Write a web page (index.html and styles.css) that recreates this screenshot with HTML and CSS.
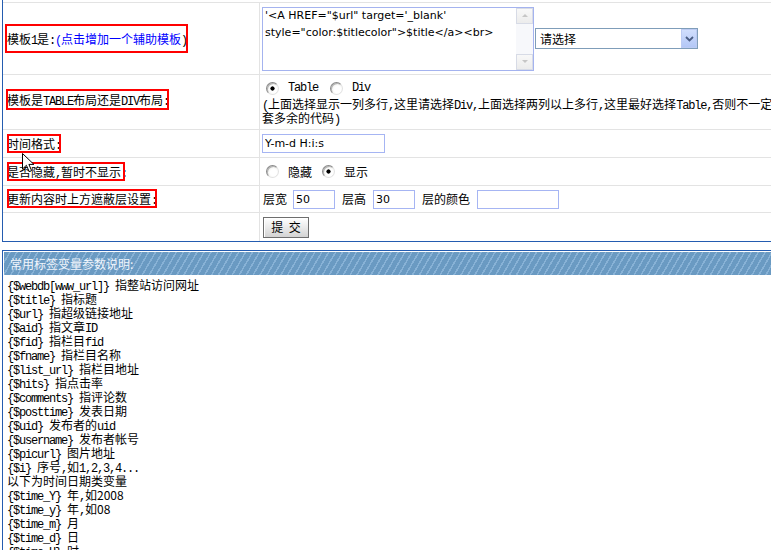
FILE: index.html
```html
<!DOCTYPE html>
<html lang="zh-CN">
<head>
<meta charset="utf-8">
<title>模板设置</title>
<link rel="stylesheet" href="styles.css">
</head>
<body>
<div class="page">
  <form class="form" action="#">
    <div class="row r1">
      <div class="label"><span class="mark m1">模板<span class="en">1</span>是<span class="en">:</span><a href="#"><span class="en">(</span>点击增加一个辅助模板</a><span class="en">)</span></span></div>
      <div class="field">
        <div class="textarea">
          <div class="ta-text">'&lt;A HREF="$url" target='_blank'
style="color:$titlecolor"&gt;$title&lt;/a&gt;&lt;br&gt;</div>
          <div class="ta-bar">
            <span class="ta-btn up"></span>
            <span class="ta-btn down"></span>
          </div>
        </div>
        <div class="select">
          <span class="select-text">请选择</span>
          <span class="select-btn">
            <svg width="9" height="6" viewBox="0 0 9 6"><path d="M1 1 L4.5 4.5 L8 1" fill="none" stroke="#4a5d84" stroke-width="1.8"/></svg>
          </span>
        </div>
      </div>
    </div>

    <div class="row r2">
      <div class="label"><span class="mark m2">模板是<span class="en">TABLE</span>布局还是<span class="en">DIV</span>布局<span class="en">:</span></span></div>
      <div class="field f2">
        <div class="opts">
          <label class="opt"><input class="rb" type="radio" name="layout" checked><span class="en">Table</span></label>
          <label class="opt"><input class="rb" type="radio" name="layout"><span class="en">Div</span></label>
        </div>
        <div class="note"><span class="en">(</span>上面选择显示一列多行<span class="en">,</span>这里请选择<span class="en">Div,</span>上面选择两列以上多行<span class="en">,</span>这里最好选择<span class="en">Table,</span>否则不一定要套多余的代码<span class="en">)</span></div>
      </div>
    </div>

    <div class="row r3">
      <div class="label"><span class="mark m3">时间格式<span class="en">:</span></span></div>
      <div class="field">
        <input class="txt w-fmt" type="text" value="Y-m-d H:i:s">
      </div>
    </div>

    <div class="row r4">
      <div class="label"><span class="mark m4">是否隐藏<span class="en">,</span>暂时不显示<span class="en">:</span></span></div>
      <div class="field">
        <div class="opts opts-cn">
          <label class="opt"><input class="rb" type="radio" name="hide"><span>隐藏</span></label>
          <label class="opt"><input class="rb" type="radio" name="hide" checked><span>显示</span></label>
        </div>
      </div>
    </div>

    <div class="row r5">
      <div class="label"><span class="mark m5">更新内容时上方遮蔽层设置<span class="en">:</span></span></div>
      <div class="field layer">
        <span>层宽</span><input class="txt w-s" type="text" value="50">
        <span>层高</span><input class="txt w-s" type="text" value="30">
        <span>层的颜色</span><input class="txt w-c" type="text" value="">
      </div>
    </div>

    <div class="row r6">
      <div class="label"></div>
      <div class="field">
        <button class="btn" type="submit">提 交</button>
      </div>
    </div>
  </form>

  <div class="panel">
    <div class="panel-head">常用标签变量参数说明:</div>
    <div class="vars">
      <div><span class="en">{$webdb[www_url]} </span>指整站访问网址</div>
      <div><span class="en">{$title} </span>指标题</div>
      <div><span class="en">{$url} </span>指超级链接地址</div>
      <div><span class="en">{$aid} </span>指文章<span class="en">ID</span></div>
      <div><span class="en">{$fid} </span>指栏目<span class="en">fid</span></div>
      <div><span class="en">{$fname} </span>指栏目名称</div>
      <div><span class="en">{$list_url} </span>指栏目地址</div>
      <div><span class="en">{$hits} </span>指点击率</div>
      <div><span class="en">{$comments} </span>指评论数</div>
      <div><span class="en">{$posttime} </span>发表日期</div>
      <div><span class="en">{$uid} </span>发布者的<span class="en">uid</span></div>
      <div><span class="en">{$username} </span>发布者帐号</div>
      <div><span class="en">{$picurl} </span>图片地址</div>
      <div><span class="en">{$i} </span>序号<span class="en">,</span>如<span class="en">1,2,3,4...</span></div>
      <div>以下为时间日期类变量</div>
      <div><span class="en">{$time_Y} </span>年<span class="en">,</span>如2008</div>
      <div><span class="en">{$time_y} </span>年<span class="en">,</span>如08</div>
      <div><span class="en">{$time_m} </span>月</div>
      <div><span class="en">{$time_d} </span>日</div>
      <div><span class="en">{$time_H} </span>时</div>
    </div>
  </div>

  <svg class="cursor" width="13" height="20" viewBox="0 0 13 20">
    <path d="M0.5 0.5 L0.5 16 L4.4 12.3 L7.2 18.6 L9.6 17.6 L6.9 11.4 L11.9 11.4 Z" fill="#fff" stroke="#000" stroke-width="1" stroke-linejoin="miter"/>
  </svg>
</div>
</body>
</html>
```

FILE: styles.css
```css
* {
  box-sizing: border-box;
}

html,
body {
  margin: 0;
  padding: 0;
  overflow: hidden;
  background: #fff;
}

body {
  font: 12px/14px "Noto Sans CJK SC", "Noto Sans CJK JP", sans-serif;
  color: #000;
}

.page {
  position: relative;
  width: 784px;
  height: 550px;
  margin-left: 2px;
}

/* latin words drawn in a narrow fixed pitch, 6px per character */
.en {
  font-family: "Liberation Mono", monospace;
  letter-spacing: -1.2px;
}

/* keep mixed-font lines on a 14px pitch */
.note .en,
.vars .en,
.mark .en {
  line-height: 0;
}

/* ---------- settings table ---------- */
.form {
  margin: 0;
  padding-top: 2px;
  border-left: 1px solid #245cb0;
  border-bottom: 1px solid #245cb0;
}

.row {
  display: grid;
  grid-template-columns: 257px 1fr;
  border-top: 1px solid #e3e3e3;
}

.r1 { height: 72px; }
.r2 { height: 55px; }
.r3,
.r4 { height: 28px; }
.r5 { height: 27px; }
.r6 { height: 29px; }

.label {
  display: flex;
  align-items: center;
  padding-left: 4px;
  border-right: 1px solid #e3e3e3;
}

.field {
  display: flex;
  align-items: center;
  padding-left: 2px;
  min-width: 0;
}

.label a {
  color: #0000ff;
  text-decoration: none;
}

/* red frames around the labels */
.mark {
  position: relative;
  display: inline-block;
  height: 14px;
  line-height: 14px;
  white-space: nowrap;
}

.mark::after {
  content: "";
  position: absolute;
  left: 0;
  right: 0;
  top: -3px;
  bottom: -2px;
  border: 2px solid #f00;
}

.m1::after { left: -2px; right: -1px; top: -8px; bottom: -7px; }
.m2 { margin-bottom: 4px; }
.m2::after { left: -1px; top: -4px; bottom: -3px; }
.m4::after { right: 2px; }

/* ---------- textarea ---------- */
.textarea {
  display: flex;
  width: 272px;
  height: 64px;
  border: 1px solid #a4b3ef;
  background: #fff;
}

.ta-text {
  flex: 1;
  margin-top: -1px;
  padding: 0 2px;
  font: 11px/17px "DejaVu Sans", sans-serif;
  white-space: pre;
  overflow: hidden;
}

.ta-bar {
  width: 17px;
  display: flex;
  flex-direction: column;
  justify-content: space-between;
  background: #f7f8fb;
}

.ta-btn {
  display: flex;
  align-items: center;
  justify-content: center;
  height: 16px;
  border: 1px solid #d7dbe6;
  background: linear-gradient(#f8f8f8, #ececec);
}

.ta-btn::before {
  content: "";
  border-left: 3px solid transparent;
  border-right: 3px solid transparent;
}

.ta-btn.up::before { border-bottom: 3px solid #c6c6c6; }
.ta-btn.down::before { border-top: 3px solid #c6c6c6; }

/* ---------- select ---------- */
.select {
  display: flex;
  align-items: center;
  width: 163px;
  height: 21px;
  margin-left: 1px;
  border: 1px solid #7f9db9;
  background: #fff;
}

.select-text {
  flex: 1;
  padding-left: 4px;
}

.select-btn {
  display: flex;
  align-items: center;
  justify-content: center;
  width: 16px;
  height: 19px;
  border: 1px solid #bccbf3;
  background: linear-gradient(#d0defd, #b3c7f6);
}

/* ---------- radios ---------- */
.opts {
  display: flex;
  align-items: center;
}

.opt {
  display: inline-flex;
  align-items: center;
  gap: 9px;
}

.opt + .opt {
  margin-left: 12px;
}

.opts .opt:first-child {
  margin-left: 4px;
}

.opts-cn .opt + .opt {
  margin-left: 10px;
}

.rb {
  -webkit-appearance: none;
  appearance: none;
  width: 13px;
  height: 13px;
  margin: 0;
  border-radius: 50%;
  border: 1px solid;
  border-color: #8a8a8a #e2e2e2 #e2e2e2 #8a8a8a;
  background: radial-gradient(circle at 60% 60%, #ffffff 35%, #e4e4de 100%);
  box-shadow: inset 1px 1px 0 #b4b4b4;
}

.rb:checked {
  background:
    radial-gradient(circle, #000 0 1.8px, transparent 2.4px),
    radial-gradient(circle at 60% 60%, #ffffff 35%, #e4e4de 100%);
}

.f2 {
  flex-direction: column;
  align-items: stretch;
  justify-content: flex-start;
  padding-top: 4px;
}

.f2 .opts {
  height: 18px;
}

.note {
  line-height: 14px;
}

/* ---------- text inputs ---------- */
.txt {
  height: 19px;
  margin: 0;
  padding: 0 2px;
  border: 1px solid #a6b5f3;
  font: 11px "DejaVu Sans", sans-serif;
  color: #000;
  background: #fff;
  outline: none;
}

.w-fmt { width: 123px; }
.w-s { width: 42px; }
.w-c { width: 82px; }

.layer {
  gap: 7px;
  padding-left: 3px;
}

.layer > span:first-child {
  margin-right: -1px;
}

/* ---------- submit ---------- */
.btn {
  width: 46px;
  height: 21px;
  margin-left: 1px;
  padding: 0;
  border: 1px solid #6e6e6e;
  background: linear-gradient(#ffffff, #ececec 45%, #d3d3d3);
  box-shadow: inset 1px 1px 0 #fff;
  font: 12px/14px "Noto Sans CJK SC", sans-serif;
  word-spacing: 3px;
  color: #000;
}

/* ---------- tag reference panel ---------- */
.panel {
  margin-top: 8px;
  padding: 1px 0 0 1px;
  border-left: 1px solid #245cb0;
  border-top: 1px solid #245cb0;
}

.panel-head {
  height: 23px;
  line-height: 23px;
  padding-left: 6px;
  color: #f1f5fb;
  background: repeating-linear-gradient(120deg, #6a9ac2 0 4.5px, #88b2d6 4.5px 6px);
}

.vars {
  padding: 3px 0 0 3px;
}

.vars > div {
  height: 14px;
  line-height: 14px;
  white-space: nowrap;
}

/* mouse pointer resting on the form */
.cursor {
  position: absolute;
  left: 20px;
  top: 153px;
}
```
